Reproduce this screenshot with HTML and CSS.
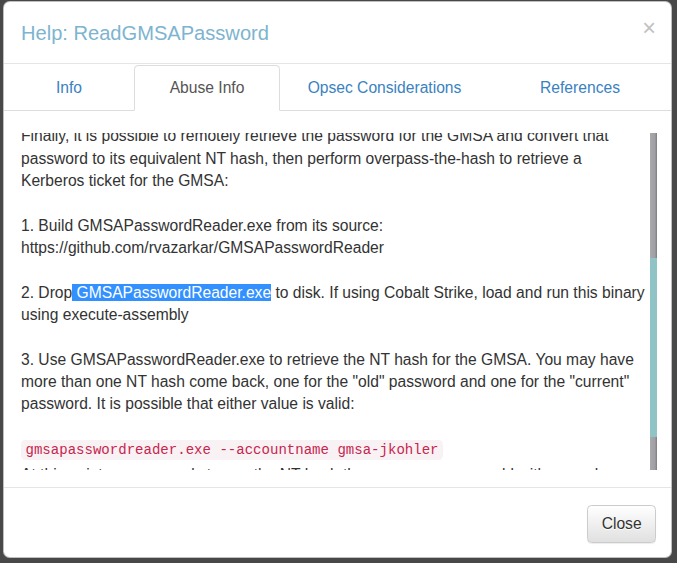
FILE: index.html
```html
<!DOCTYPE html>
<html>
<head>
<meta charset="utf-8">
<link rel="stylesheet" href="styles.css">
</head>
<body>
<div class="modal">
  <div class="modal-header">
    <h4 class="modal-title">Help: ReadGMSAPassword</h4>
    <button class="close" type="button">×</button>
  </div>
  <ul class="tabs">
    <li class="tab"><a>Info</a></li>
    <li class="tab active"><a>Abuse Info</a></li>
    <li class="tab"><a>Opsec Considerations</a></li>
    <li class="tab"><a>References</a></li>
  </ul>
  <div class="modal-body">
    <div class="scroll-area">
      <div class="scroll-view">
        <div class="scroll-text">
          <p>Finally, it is possible to remotely retrieve the password for the GMSA and convert that password to its equivalent NT hash, then perform overpass-the-hash to retrieve a Kerberos ticket for the GMSA:</p>
          <p>1. Build GMSAPasswordReader.exe from its source:<br>https://github.com/rvazarkar/GMSAPasswordReader</p>
          <p>2. Drop<span class="selected"> GMSAPasswordReader.exe</span> to disk. If using Cobalt Strike, load and run this binary using execute-assembly</p>
          <p>3. Use GMSAPasswordReader.exe to retrieve the NT hash for the GMSA. You may have more than one NT hash come back, one for the "old" password and one for the "current" password. It is possible that either value is valid:</p>
          <p class="code-line"><code>gmsapasswordreader.exe --accountname gmsa-jkohler</code></p>
          <p class="after-code">At this point you are ready to use the NT hash the same way you would with a regular user account. You can perform pass-the-hash, overpass-the-hash, or any other technique that takes an NT hash as an input.</p>
        </div>
      </div>
      <div class="scrollbar"><div class="thumb"></div></div>
    </div>
  </div>
  <div class="modal-footer">
    <button class="btn" type="button">Close</button>
  </div>
</div>
</body>
</html>
```
FILE: styles.css
```css
* { box-sizing: border-box; }

html, body {
  margin: 0;
  padding: 0;
  height: 100%;
}

body {
  background: #484848;
  font-family: "Liberation Sans", Arial, sans-serif;
  font-size: 15.64px;
  line-height: 22.34px;
  color: #333;
  overflow: hidden;
}

.modal {
  margin: 1px 0 0 3px;
  width: 669px;
  background: #fff;
  border: 1px solid rgba(0, 0, 0, 0.25);
  border-radius: 6.7px;
  display: flex;
  flex-direction: column;
  overflow: hidden;
}

.modal-header {
  display: flex;
  align-items: center;
  justify-content: space-between;
  padding: 16.5px 15px 16.5px 17px;
  border-bottom: 1px solid #e5e5e5;
}

.modal-title {
  margin: 0;
  font-size: 20.1px;
  font-weight: normal;
  line-height: 28px;
  color: #7db4cf;
}

.close {
  border: 0;
  background: transparent;
  padding: 0;
  margin: -4px 0 4px 0;
  font-family: "Liberation Sans", Arial, sans-serif;
  font-size: 23.5px;
  font-weight: normal;
  line-height: 1;
  color: #c2c2c2;
}

.tabs {
  list-style: none;
  margin: 0;
  padding: 1px 0 0 0;
  display: grid;
  grid-template-columns: 130px 146px 209px 1fr;
  border-bottom: 1px solid #ddd;
}

.tab {
  margin-bottom: -1px;
  border: 1px solid transparent;
  border-radius: 4.5px 4.5px 0 0;
  padding: 11px 5px;
  text-align: center;
  color: #3a82c0;
}

.tab.active {
  background: #fff;
  border-color: #ddd;
  border-bottom-color: transparent;
  color: #555;
}

.modal-body {
  padding: 22px 14px 17px 17px;
}

.scroll-area {
  display: flex;
  height: 337px;
}

.scroll-view {
  flex: 1;
  overflow: hidden;
}

.scroll-text {
  margin-top: -8px;
  padding-right: 2px;
}

.scroll-text p {
  margin: 0 0 22.34px 0;
}

.scroll-text p.code-line {
  margin: 4.5px 0 0 0;
}

.scroll-text p.after-code {
  margin-top: 3px;
}

.selected {
  background: #3390ff;
  color: #fff;
}

code {
  font-family: "Liberation Mono", "DejaVu Sans Mono", monospace;
  font-size: 14.05px;
  padding: 2.2px 4.5px;
  color: #c7254e;
  background: #f9f2f4;
  border-radius: 4.5px;
}

.scrollbar {
  width: 7px;
  background: linear-gradient(to right, #a9a9ac 0, #a0a0a4 70%, #7d7d80 100%);
  display: flex;
  flex-direction: column;
}

.thumb {
  margin-top: 125px;
  height: 179px;
  background: #8fc3c6;
}

.modal-footer {
  display: flex;
  justify-content: flex-end;
  padding: 17px 15px 14px 15px;
  border-top: 1px solid #e5e5e5;
}

.btn {
  font-family: "Liberation Sans", Arial, sans-serif;
  font-size: 15.64px;
  line-height: 22.34px;
  padding: 6.7px 13.4px;
  color: #333;
  background: linear-gradient(to bottom, #fff 0, #e0e0e0 100%);
  border: 1px solid #ccc;
  border-radius: 4.5px;
  text-shadow: 0 1px 0 #fff;
  box-shadow: inset 0 1px 0 rgba(255, 255, 255, .15), 0 1px 1px rgba(0, 0, 0, .075);
}
```
